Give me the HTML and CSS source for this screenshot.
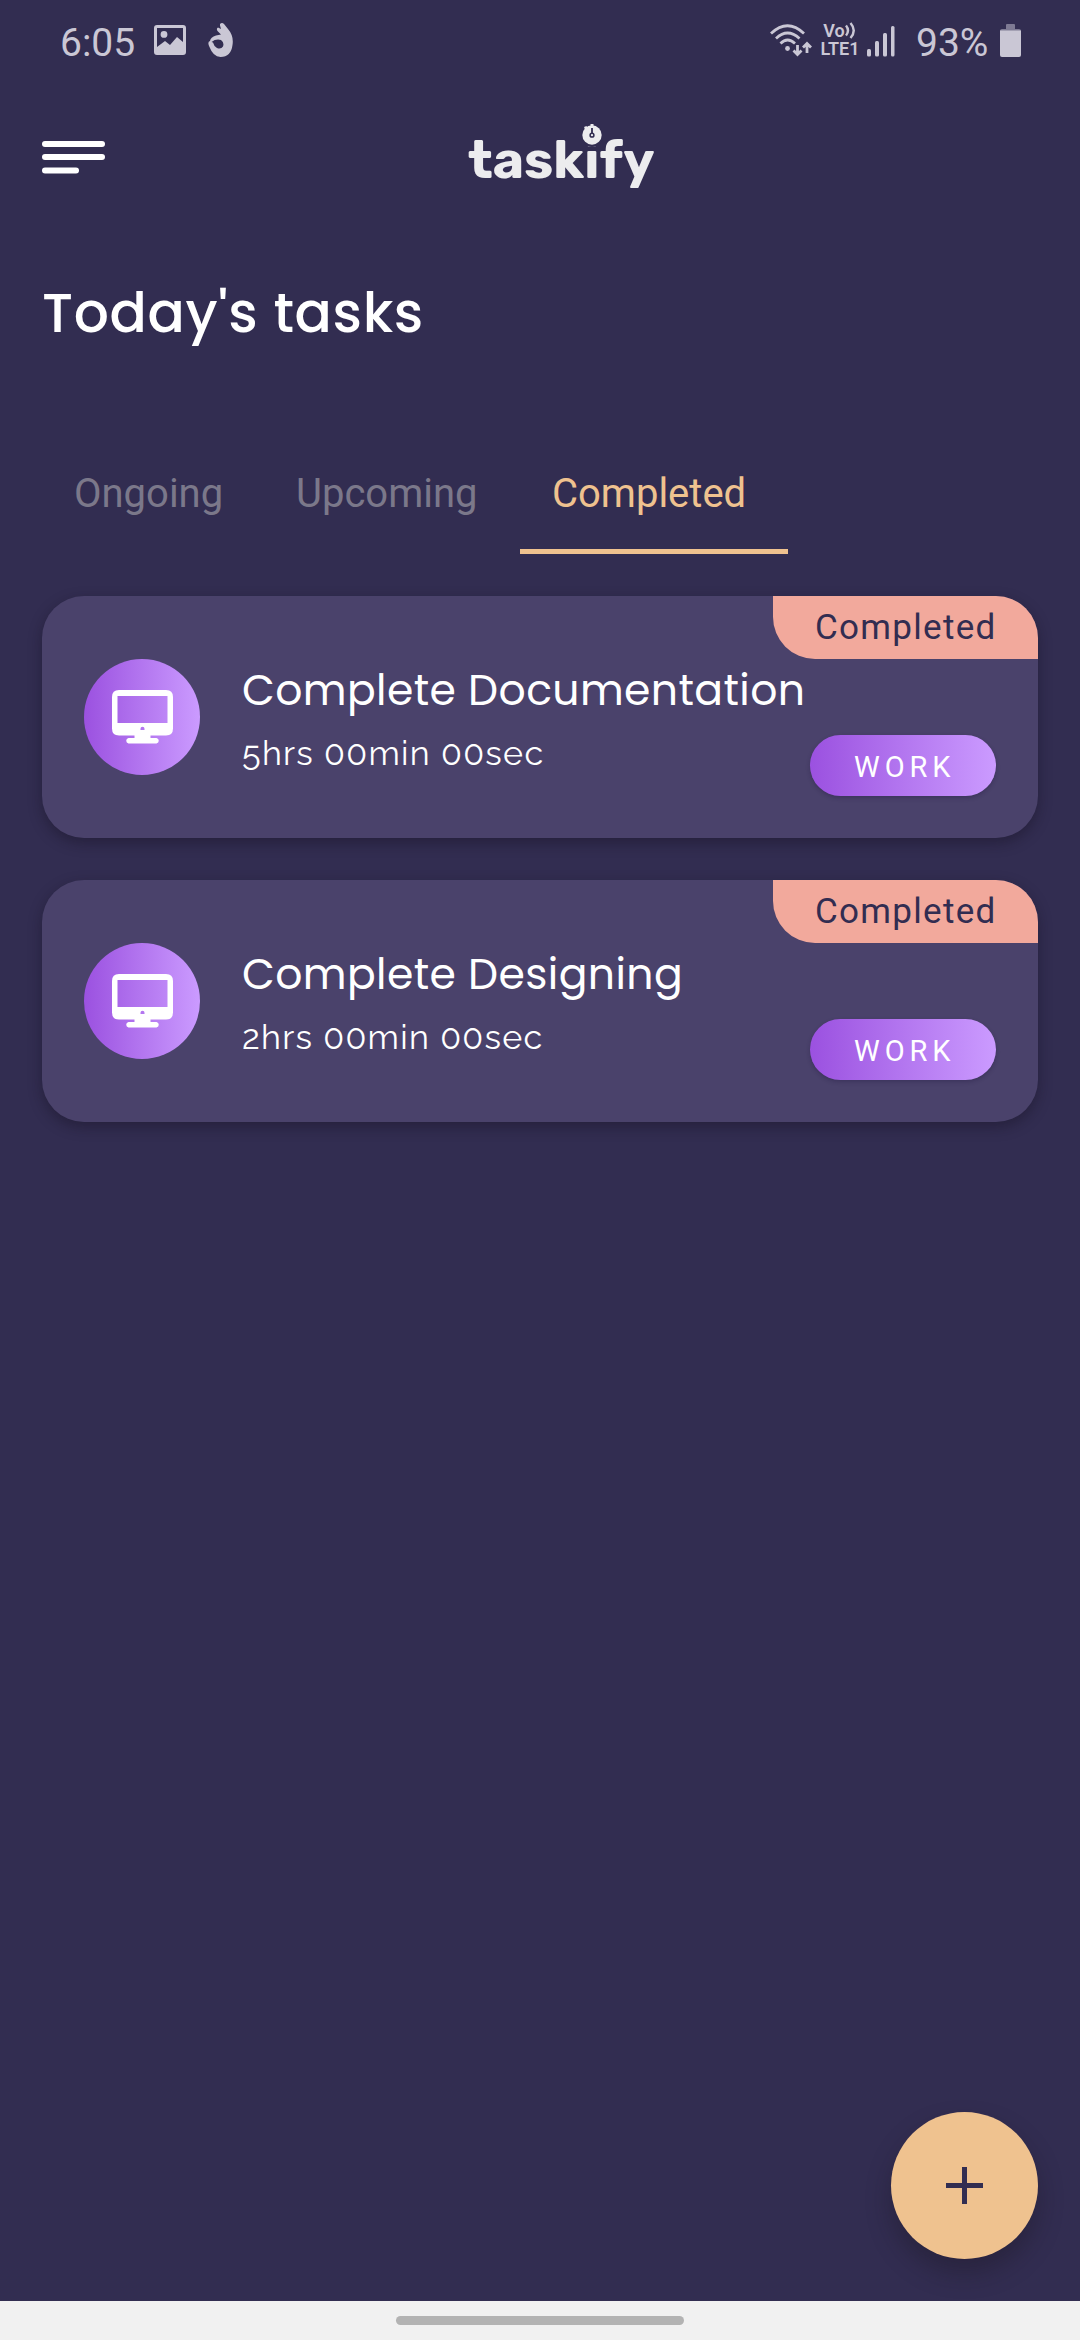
FILE: index.html
```html
<!DOCTYPE html>
<html lang="en">
<head>
<meta charset="utf-8">
<title>taskify</title>
<link rel="stylesheet" href="styles.css">
</head>
<body>
<svg width="0" height="0" class="defs">
  <symbol id="monitor" viewBox="0 0 61 54">
    <path fill="#fff" fill-rule="evenodd" d="M7 0H54Q61 0 61 7V38.500Q61 45.500 54 45.500H38.500V48H44.500A2.800 2.800 0 0 1 44.500 53.500H16.500A2.800 2.800 0 0 1 16.500 48H22.500V45.500H7Q0 45.500 0 38.500V7Q0 0 7 0ZM5.500 6V33H55.500V6ZM28.500 40H32.500V38.800A2 2 0 0 0 28.500 38.800Z"/>
  </symbol>
</svg>
<div class="screen">
  <div class="status">
    <span class="clock">6:05</span>
    <svg class="picture" width="32" height="30" viewBox="0 0 32 30"><path fill="currentColor" fill-rule="evenodd" d="M3 0H29Q32 0 32 3V27Q32 30 29 30H3Q0 30 0 27V3Q0 0 3 0ZM3 3V22L11 16L16 20L23 12L29 17V3ZM10 6A3.300 3.300 0 1 1 10 12.800A3.300 3.300 0 1 1 10 6Z"/></svg>
    <svg class="hand" width="25" height="34" viewBox="0 0 25 34"><path fill="currentColor" fill-rule="evenodd" d="M12 1Q14-1 16 1L20 6Q26 13 24.500 22Q23 34 12.500 34Q5 33.500 1.500 24Q-1 19 2 18Q2.500 14 8 12.500L13 11.500L9.500 8Q8 5.500 10 4.500L13 6L12 2.500ZM3.500 19Q8 15.500 13 17Q16.500 19.500 15 23.500Q13 26.500 9 25Q6 23.500 5 19.500Z"/></svg>
    <div class="indicators">
      <svg class="wifi" width="42" height="33" viewBox="0 0 42 33" fill="none" stroke="currentColor" stroke-width="2.800"><path d="M1 9.500Q17.500-6 34 9.500M6 14.500Q17.500 3.500 29.500 14.500M10.500 19.500Q17.500 12.500 25 19.500"/><circle cx="17.500" cy="24.500" r="2.400" fill="currentColor" stroke="none"/><path d="M27.500 21V30M23.500 26.500L27.500 30.500L31.500 26.500M37 29V20M33 23.500L37 19.500L41 23.500"/></svg>
      <div class="volte"><span class="vo">Vo<svg width="12" height="17" viewBox="0 0 12 17" fill="none" stroke="currentColor" stroke-width="2.400"><path d="M1 3.500Q5 8.500 1 13.500M5.500 1Q12 8.500 5.500 16"/></svg></span><span>LTE1</span></div>
      <svg class="signal" width="28" height="31" viewBox="0 0 28 31" fill="currentColor"><rect y="23" width="4" height="7.500" rx="1.500"/><rect x="8" y="15" width="4" height="15.500" rx="1.500"/><rect x="16" y="7" width="4" height="23.500" rx="1.500"/><rect x="24" width="3.500" height="30.500" rx="1.500"/></svg>
      <span class="percent">93%</span>
      <svg class="battery" width="21" height="33" viewBox="0 0 21 33" fill="currentColor"><path opacity=".5" d="M6 1Q6 0 7 0H14Q15 0 15 1V5H19Q21 5 21 7H0Q0 5 2 5H6Z"/><path d="M0 6.500H21V31Q21 33 19 33H2Q0 33 0 31Z"/></svg>
    </div>
  </div>

  <div class="header">
    <svg class="menu" width="63" height="33" viewBox="0 0 63 33" fill="#fff"><rect width="63" height="6" rx="3"/><rect y="13" width="63" height="6" rx="3"/><rect y="26.500" width="37" height="6" rx="3"/></svg>
    <div class="logo">taskify
      <svg class="timer" width="26" height="26" viewBox="0 0 26 26"><circle cx="13" cy="15" r="11" fill="#322d51"/><circle cx="13" cy="14" r="9.700" fill="#ececee"/><path fill="#ececee" d="M11.500 3H14.500V6H11.500ZM5 6L7.500 5L9 8L6.500 9Z"/><path d="M13 7V13" stroke="#322d51" stroke-width="1.800"/><circle cx="13" cy="14.200" r="1.900" fill="none" stroke="#322d51" stroke-width="1.500"/></svg>
    </div>
  </div>

  <h1 class="title">Today's tasks</h1>

  <div class="tabs">
    <div class="tab ongoing">Ongoing</div>
    <div class="tab upcoming">Upcoming</div>
    <div class="tab completed">Completed</div>
  </div>

  <div class="cards">
    <div class="card">
      <div class="avatar"><svg width="61" height="54"><use href="#monitor"/></svg></div>
      <div class="info"><div class="name">Complete Documentation</div><div class="time">5hrs 00min 00sec</div></div>
      <div class="side"><div class="badge">Completed</div><div class="category">WORK</div></div>
    </div>
    <div class="card">
      <div class="avatar"><svg width="61" height="54"><use href="#monitor"/></svg></div>
      <div class="info"><div class="name">Complete Designing</div><div class="time">2hrs 00min 00sec</div></div>
      <div class="side"><div class="badge">Completed</div><div class="category">WORK</div></div>
    </div>
  </div>

  <div class="add"><svg width="37" height="37" viewBox="0 0 37 37"><path d="M18.500 0V37M0 18.500H37" stroke="#322d51" stroke-width="5"/></svg></div>
  <div class="navbar"><div class="handle"></div></div>
</div>
</body>
</html>
```
FILE: styles.css
```css
* { box-sizing: border-box; }
body { margin: 0; background: #322d51; font-family: Roboto, sans-serif; }
svg { display: block; flex: none; }
.defs { position: absolute; }
.screen { width: 1080px; height: 2340px; display: flex; flex-direction: column; overflow: hidden; background: #322d51; }

.status { height: 84px; flex: none; display: flex; align-items: flex-start; padding: 0 59px 0 60px; color: #cac7d5; }
.clock, .percent { font-size: 39px; line-height: 46px; margin-top: 20px; white-space: nowrap; }
.clock { width: 94px; }
.picture { margin-top: 25px; }
.hand { margin: 23px 0 0 22px; }
.indicators { margin-left: auto; display: flex; align-items: flex-start; }
.wifi { margin-top: 24px; }
.volte { width: 40px; margin: 22px 0 0 8px; font-size: 18px; line-height: 18px; font-weight: 600; display: flex; flex-direction: column; align-items: center; }
.vo { display: flex; }
.signal { margin: 26px 0 0 7px; }
.percent { width: 75px; margin-left: 21px; }
.battery { margin: 24px 0 0 9px; }

.header { height: 146px; flex: none; display: flex; padding: 31px 42px 0; }
.menu { margin-top: 26px; }
.logo { position: relative; margin-left: 363px; font: 700 53px/72px Rubik, Inter, sans-serif; color: #ececee; white-space: nowrap; height: 72px; margin-top: 9px; }
.timer { position: absolute; left: 111px; top: -3px; }

.title { margin: 0; height: 235px; padding: 43px 42px 0; flex: none; font: 500 55.100px/80px Poppins, Inter, sans-serif; letter-spacing: .650px; color: #fff; }

.tabs { height: 89px; flex: none; padding-left: 42px; display: flex; font-size: 40px; line-height: 46px; color: #7b788a; }
.tab { padding: 6px 0 0 32px; }
.ongoing { width: 221px; }
.upcoming { width: 257px; padding-left: 33px; }
.completed { width: 268px; color: #efc28f; border-bottom: 5px solid #efc28f; }

.cards { flex: 1; padding: 42px; display: flex; flex-direction: column; gap: 42px; }
.card { height: 242px; border-radius: 42px; background: #4a426b; display: flex; align-items: center; padding-left: 42px; box-shadow: 0 5px 14px rgba(20, 14, 30, .4); overflow: hidden; }
.avatar { width: 116px; height: 116px; border-radius: 50%; flex: none; background: linear-gradient(90deg, #9b51e0, #cb9bff); display: flex; align-items: center; justify-content: center; }
.info { width: 573px; align-self: stretch; margin-right: -42px; padding: 62px 0 0 42px; color: #fff; white-space: nowrap; }
.name { font: 400 42.500px/64px Poppins, Inter, sans-serif; letter-spacing: .4px; }
.time { font: 400 34.100px/44px Raleway, Lato, sans-serif; margin-top: 9px; letter-spacing: 1.310px; }
.side { width: 265px; margin-left: auto; align-self: stretch; display: flex; flex-direction: column; align-items: flex-end; }
.badge { width: 265px; height: 63px; border-radius: 0 0 0 42px; background: #f2a99c; color: #322d51; padding-left: 42px; font-size: 35px; line-height: 63px; letter-spacing: 1.300px; }
.category { width: 186px; height: 61px; margin: 76px 42px 0 0; border-radius: 31px; background: linear-gradient(90deg, #9b51e0, #cb9bff); box-shadow: 0 2px 4px rgba(30, 20, 60, .3); color: #fff; font-size: 29px; line-height: 65px; letter-spacing: 4.900px; padding-left: 44px; }

.add { align-self: flex-end; margin: 0 42px 42px 0; flex: none; width: 147px; height: 147px; border-radius: 50%; background: #efc28f; box-shadow: 0 14px 24px rgba(25, 20, 30, .35); display: flex; align-items: center; justify-content: center; }
.navbar { height: 39px; flex: none; background: #f1f1f1; display: flex; align-items: center; justify-content: center; }
.handle { width: 288px; height: 9px; border-radius: 5px; background: #b3b3b3; }
```
